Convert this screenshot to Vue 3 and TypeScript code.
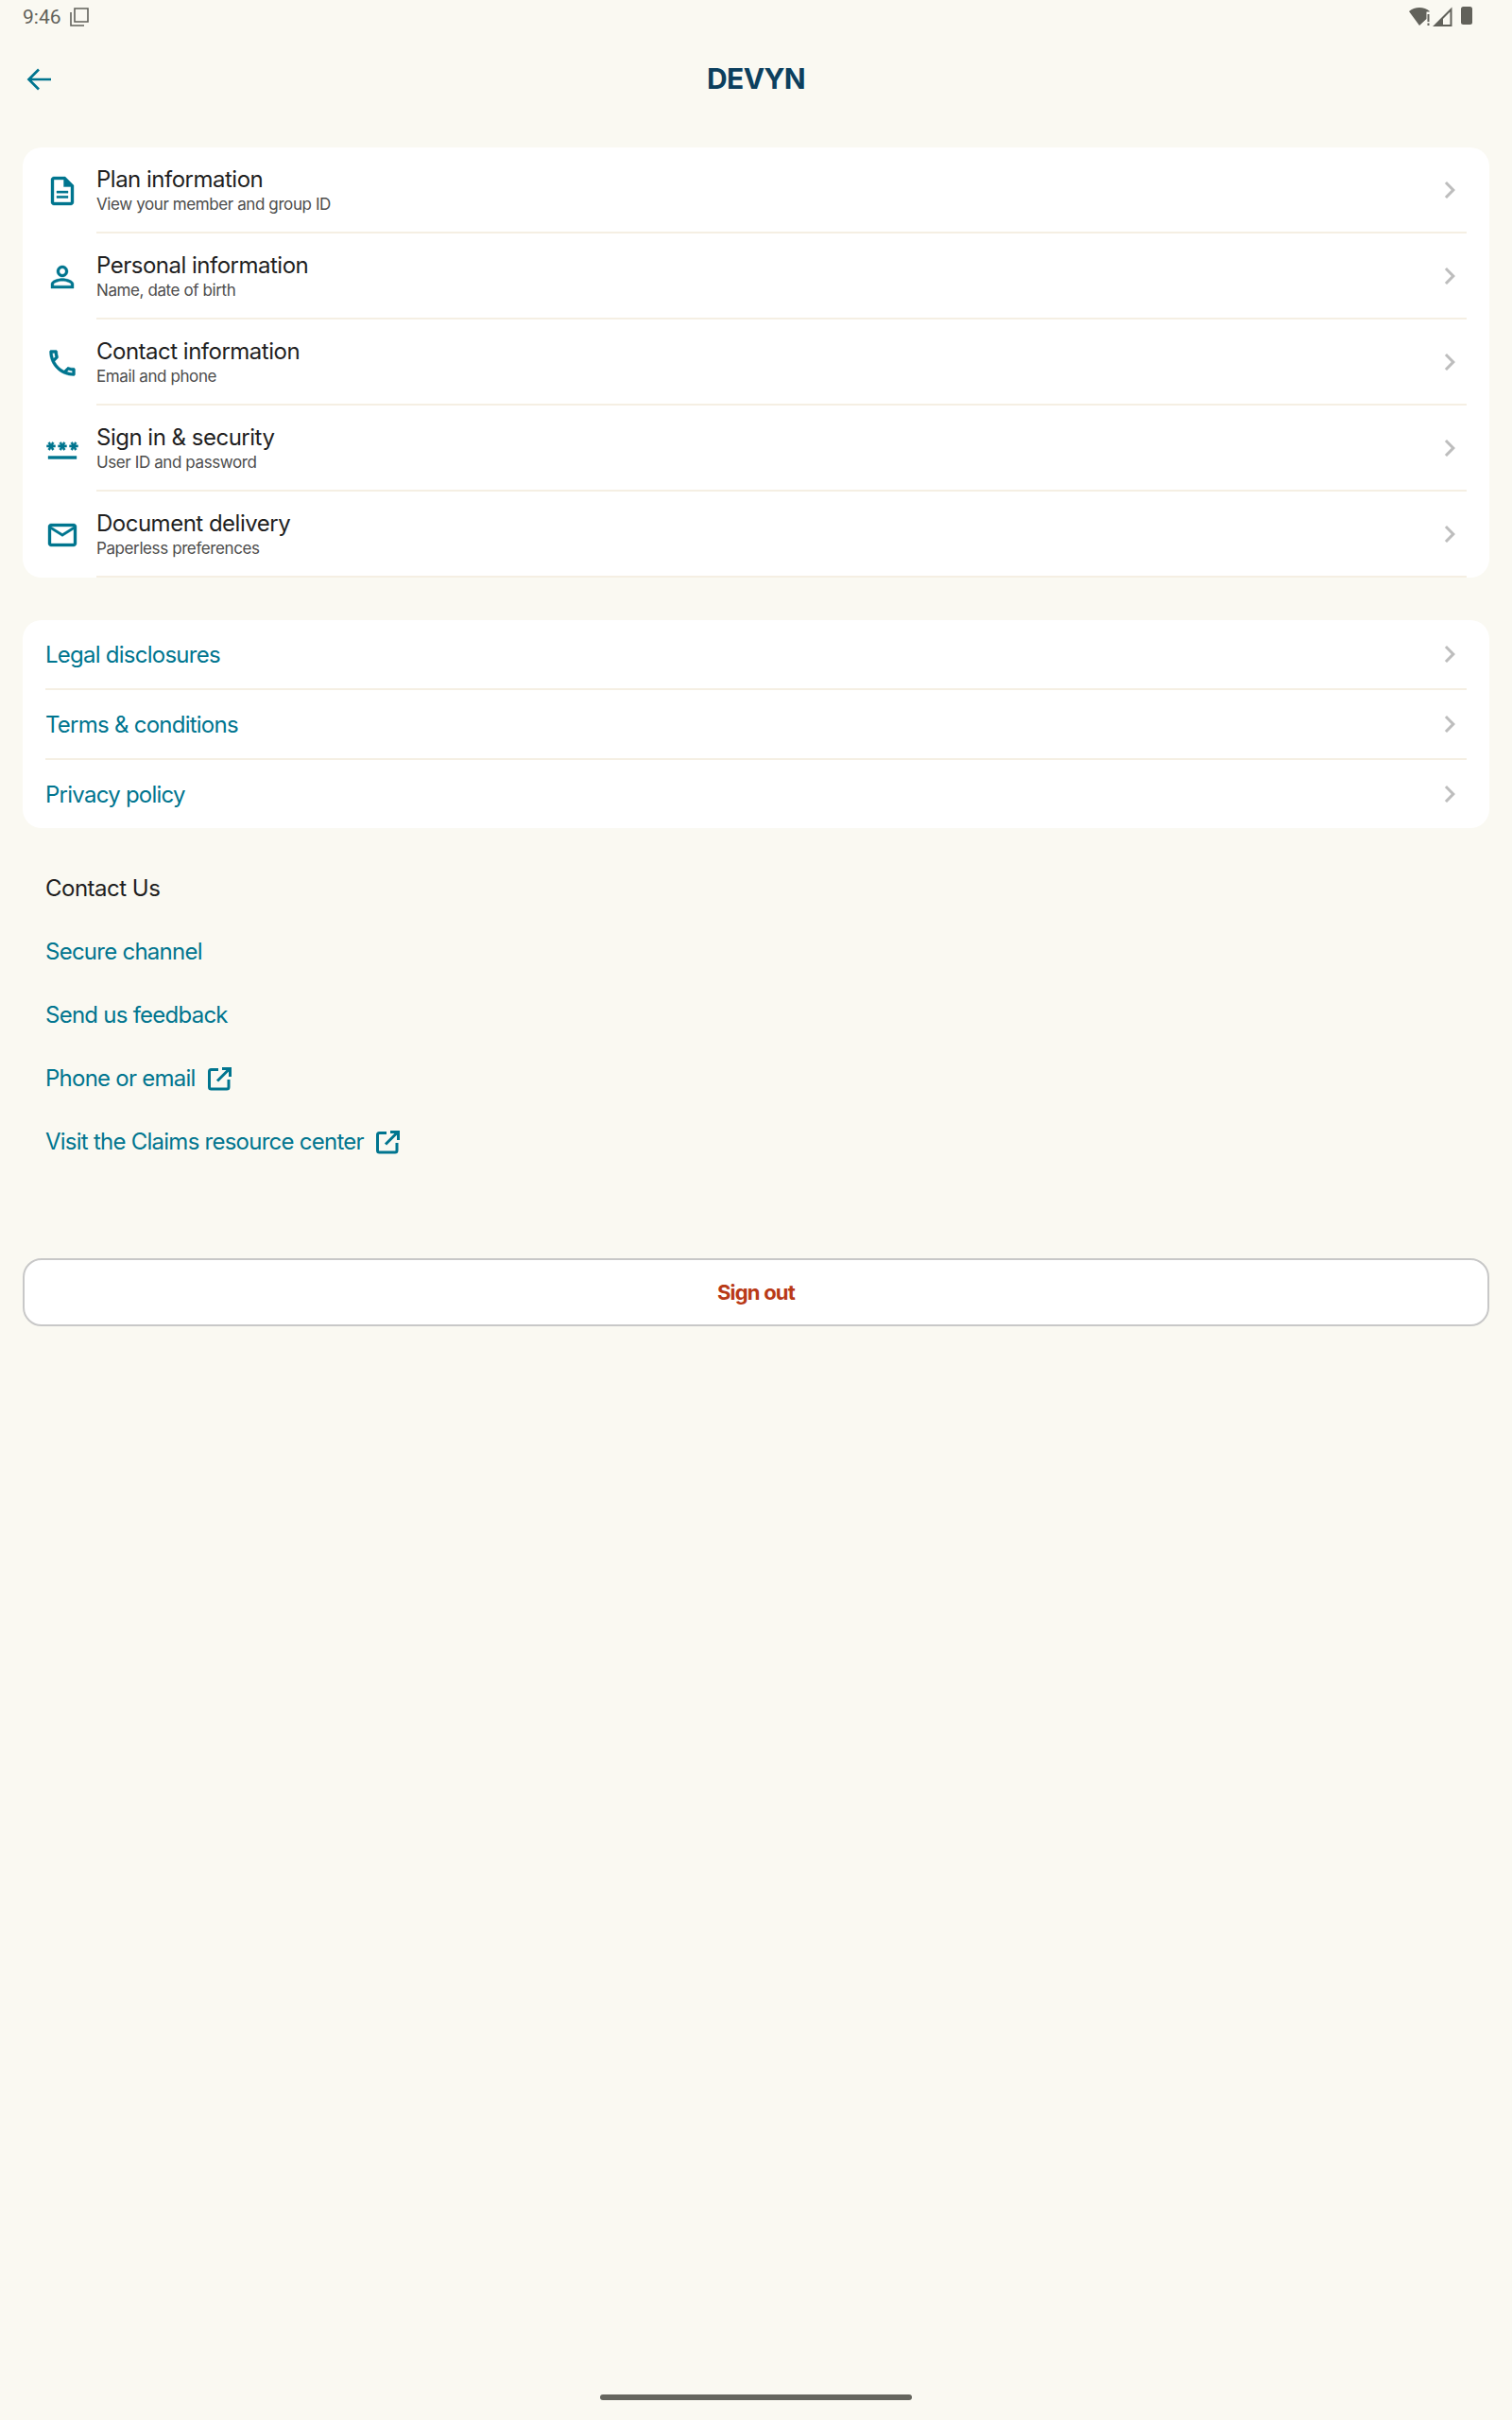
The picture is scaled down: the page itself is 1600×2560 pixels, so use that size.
<template>
  <div class="page">
    <div class="status-bar">
      <div class="status-left">
        <span class="time">9:46</span>
        <svg class="copy-icon" width="20" height="20" viewBox="0 0 20 20">
          <path d="M5 1h14v14H5z" fill="none" stroke="#62625b" stroke-width="1.6" />
          <path d="M1 5v14h14" fill="none" stroke="#62625b" stroke-width="1.6" />
        </svg>
      </div>
      <div class="status-right">
        <svg width="68" height="22" viewBox="0 0 68 22">
          <path d="M0 5C3 2.500 7 1 11 1s8 1.500 11 4l-.5.5h-3v7.500l-7.500 7z" fill="#62625b" />
          <path d="M19.500 8h2v8h-2zM19.500 17.500h2V20h-2z" fill="#62625b" />
          <path d="M44.500 3v17h-17z" fill="none" stroke="#62625b" stroke-width="2" />
          <path d="M27 20.500L36 12v8.500z" fill="#62625b" />
          <rect x="55" y="0" width="12" height="19" rx="2.500" fill="#62625b" />
        </svg>
      </div>
    </div>

    <header class="header">
      <svg class="back" width="36" height="36" viewBox="0 0 36 36">
        <path d="M30 18H7M17 7.500 6.500 18 17 28.500" fill="none" stroke="#00758f" stroke-width="2.700" />
      </svg>
      <h1 class="title">DEVYN</h1>
    </header>

    <main class="content">
      <section class="card">
        <div v-for="item in accountRows" :key="item.title" class="row">
          <svg class="row-icon" width="36" height="36" viewBox="0 0 24 24">
            <path :d="item.icon" fill="#00758f" stroke="#00758f" stroke-width="0.25" />
          </svg>
          <div class="row-body">
            <div class="row-text">
              <div class="row-title">{{ item.title }}</div>
              <div class="row-sub">{{ item.sub }}</div>
            </div>
            <svg width="36" height="36" viewBox="0 0 24 24">
              <path :d="chevron" fill="#bdbdbd" />
            </svg>
          </div>
        </div>
      </section>

      <section class="card legal">
        <div v-for="label in legalRows" :key="label" class="legal-row">
          <span class="link">{{ label }}</span>
          <svg width="36" height="36" viewBox="0 0 24 24">
            <path :d="chevron" fill="#bdbdbd" />
          </svg>
        </div>
      </section>

      <section class="contact">
        <div class="contact-row contact-title">Contact Us</div>
        <div v-for="item in contactRows" :key="item.label" class="contact-row">
          <span class="link">{{ item.label }}</span>
          <svg v-if="item.external" class="external" width="32" height="32" viewBox="0 0 32 32">
            <path d="M15 6.500H7.500a2 2 0 0 0-2 2V25a2 2 0 0 0 2 2H24a2 2 0 0 0 2-2v-8" fill="none" stroke="#00758f" stroke-width="3" />
            <path d="M19 5.500h8.500V14M27 5.500 14 18.500" fill="none" stroke="#00758f" stroke-width="3" />
          </svg>
        </div>
      </section>

      <button class="sign-out" type="button">Sign out</button>
    </main>

    <div class="nav-bar"><div class="handle"></div></div>
  </div>
</template>

<script setup lang="ts">
interface AccountRow {
  title: string
  sub: string
  icon: string
}

const chevron = 'M10 6L8.59 7.41 13.17 12l-4.58 4.59L10 18l6-6z'

const accountRows: AccountRow[] = [
  {
    title: 'Plan information',
    sub: 'View your member and group ID',
    icon: 'M8 15.500h8v1.500H8zm0-3.500h8v1.500H8zm6-10H6c-1.100 0-2 .9-2 2v16c0 1.100.89 2 1.990 2H18c1.100 0 2-.9 2-2V8l-6-6zm4 18H6V4h7v5h5v11z'
  },
  {
    title: 'Personal information',
    sub: 'Name, date of birth',
    icon: 'M12 5.900c1.160 0 2.100.94 2.100 2.100s-.94 2.100-2.100 2.100S9.900 9.160 9.900 8s.94-2.100 2.100-2.100m0 9c2.970 0 6.100 1.460 6.100 2.100v1.100H5.900V17c0-.64 3.130-2.100 6.100-2.100M12 4C9.790 4 8 5.790 8 8s1.790 4 4 4 4-1.790 4-4-1.790-4-4-4zm0 9c-2.670 0-8 1.340-8 4v3h16v-3c0-2.660-5.330-4-8-4z'
  },
  {
    title: 'Contact information',
    sub: 'Email and phone',
    icon: 'M6.540 5c.06.89.21 1.760.45 2.590l-1.200 1.200c-.41-1.200-.67-2.470-.76-3.790h1.510m9.860 12.020c.85.24 1.720.39 2.600.45v1.490c-1.320-.09-2.590-.35-3.800-.75l1.200-1.190M7.500 3H4c-.55 0-1 .45-1 1 0 9.390 7.610 17 17 17 .55 0 1-.45 1-1v-3.490c0-.55-.45-1-1-1-1.240 0-2.450-.2-3.570-.57-.1-.04-.21-.05-.31-.05-.26 0-.51.1-.71.29l-2.200 2.200c-2.830-1.450-5.150-3.760-6.590-6.590l2.200-2.200c.28-.28.36-.67.25-1.020C8.700 6.450 8.500 5.250 8.500 4c0-.55-.45-1-1-1z'
  },
  {
    title: 'Sign in & security',
    sub: 'User ID and password',
    icon: 'M2 17h20v2H2v-2zm1.150-4.050L4 11.470l.85 1.480 1.300-.75-.85-1.480H7v-1.500H5.300l.85-1.470L4.850 7 4 8.470 3.150 7l-1.300.75.85 1.470H1v1.500h1.700l-.85 1.480 1.300.75zm6.700-.75 1.300.75.85-1.480.85 1.480 1.300-.75-.85-1.480H15v-1.500h-1.700l.85-1.470-1.300-.75L12 8.470 11.150 7l-1.300.75.85 1.470H9v1.500h1.700l-.85 1.480zM23 9.220h-1.700l.85-1.470-1.300-.75L20 8.470 19.150 7l-1.300.75.85 1.470H17v1.500h1.700l-.85 1.480 1.300.75.85-1.480.85 1.480 1.300-.75-.85-1.480H23v-1.500z'
  },
  {
    title: 'Document delivery',
    sub: 'Paperless preferences',
    icon: 'M22 6c0-1.100-.9-2-2-2H4c-1.100 0-2 .9-2 2v12c0 1.100.9 2 2 2h16c1.100 0 2-.9 2-2V6zm-2 0l-8 5-8-5h16zm0 12H4V8l8 5 8-5v10z'
  }
]

const legalRows = ['Legal disclosures', 'Terms & conditions', 'Privacy policy']

const contactRows = [
  { label: 'Secure channel', external: false },
  { label: 'Send us feedback', external: false },
  { label: 'Phone or email', external: true },
  { label: 'Visit the Claims resource center', external: true }
]
</script>

<style scoped>
.page {
  display: flex;
  flex-direction: column;
  min-height: 2560px;
  background: #faf9f2;
  font-family: Inter, "Liberation Sans", sans-serif;
  color: #1f1f1f;
}

.status-bar {
  display: flex;
  justify-content: space-between;
  align-items: center;
  height: 36px;
  padding: 0 41px 0 24px;
}

.status-left {
  display: flex;
  align-items: center;
  gap: 9px;
}

.time {
  font-family: Roboto, sans-serif;
  font-size: 21px;
  color: #62625b;
}

.status-right {
  display: flex;
}

.header {
  position: relative;
  display: flex;
  justify-content: center;
  align-items: center;
  height: 96px;
  padding-bottom: 2px;
  box-sizing: border-box;
}

.back {
  position: absolute;
  left: 24px;
  top: 30px;
}

.title {
  margin: 0;
  font-size: 30px;
  font-weight: 700;
  letter-spacing: -0.6px;
  color: #0c3f5e;
}

.content {
  display: flex;
  flex-direction: column;
  padding: 24px 24px 0;
}

.card {
  background: #fff;
  border-radius: 20px;
}

.row {
  display: flex;
  align-items: center;
  height: 91px;
  padding-left: 24px;
}

.row-icon {
  flex: none;
  margin-right: 18px;
}

.row-body {
  flex: 1;
  display: flex;
  justify-content: space-between;
  align-items: center;
  box-sizing: border-box;
  height: 100%;
  margin-right: 24px;
  border-bottom: 2px solid #f5efe3;
}

.row-title {
  font-size: 24px;
  line-height: 32px;
  letter-spacing: -0.5px;
}

.row-sub {
  margin-top: -1px;
  padding-bottom: 1px;
  font-size: 17px;
  line-height: 22px;
  letter-spacing: -0.4px;
  color: #4d4d4d;
}

.legal {
  margin-top: 45px;
  padding: 0 24px;
}

.legal-row {
  display: flex;
  justify-content: space-between;
  align-items: center;
  box-sizing: border-box;
  height: 74px;
  border-bottom: 2px solid #f5efe3;
}

.legal-row:last-child {
  height: 72px;
  border-bottom: none;
}

.link {
  font-size: 24px;
  letter-spacing: -0.75px;
  color: #00758f;
}

.contact {
  margin-top: 30px;
  padding-left: 24px;
}

.contact-row {
  display: flex;
  align-items: center;
  height: 67px;
}

.contact-title {
  font-size: 24px;
  letter-spacing: -0.5px;
}

.external {
  margin-left: 9px;
}

.sign-out {
  height: 72px;
  margin-top: 90px;
  background: #fff;
  border: 2px solid #c8c8c8;
  border-radius: 20px;
  font-family: inherit;
  font-size: 22px;
  font-weight: 700;
  letter-spacing: -0.8px;
  color: #b93a17;
}

.nav-bar {
  display: flex;
  justify-content: center;
  margin-top: auto;
  padding-bottom: 21px;
}

.handle {
  width: 330px;
  height: 6px;
  border-radius: 3px;
  background: #65655e;
}
</style>
